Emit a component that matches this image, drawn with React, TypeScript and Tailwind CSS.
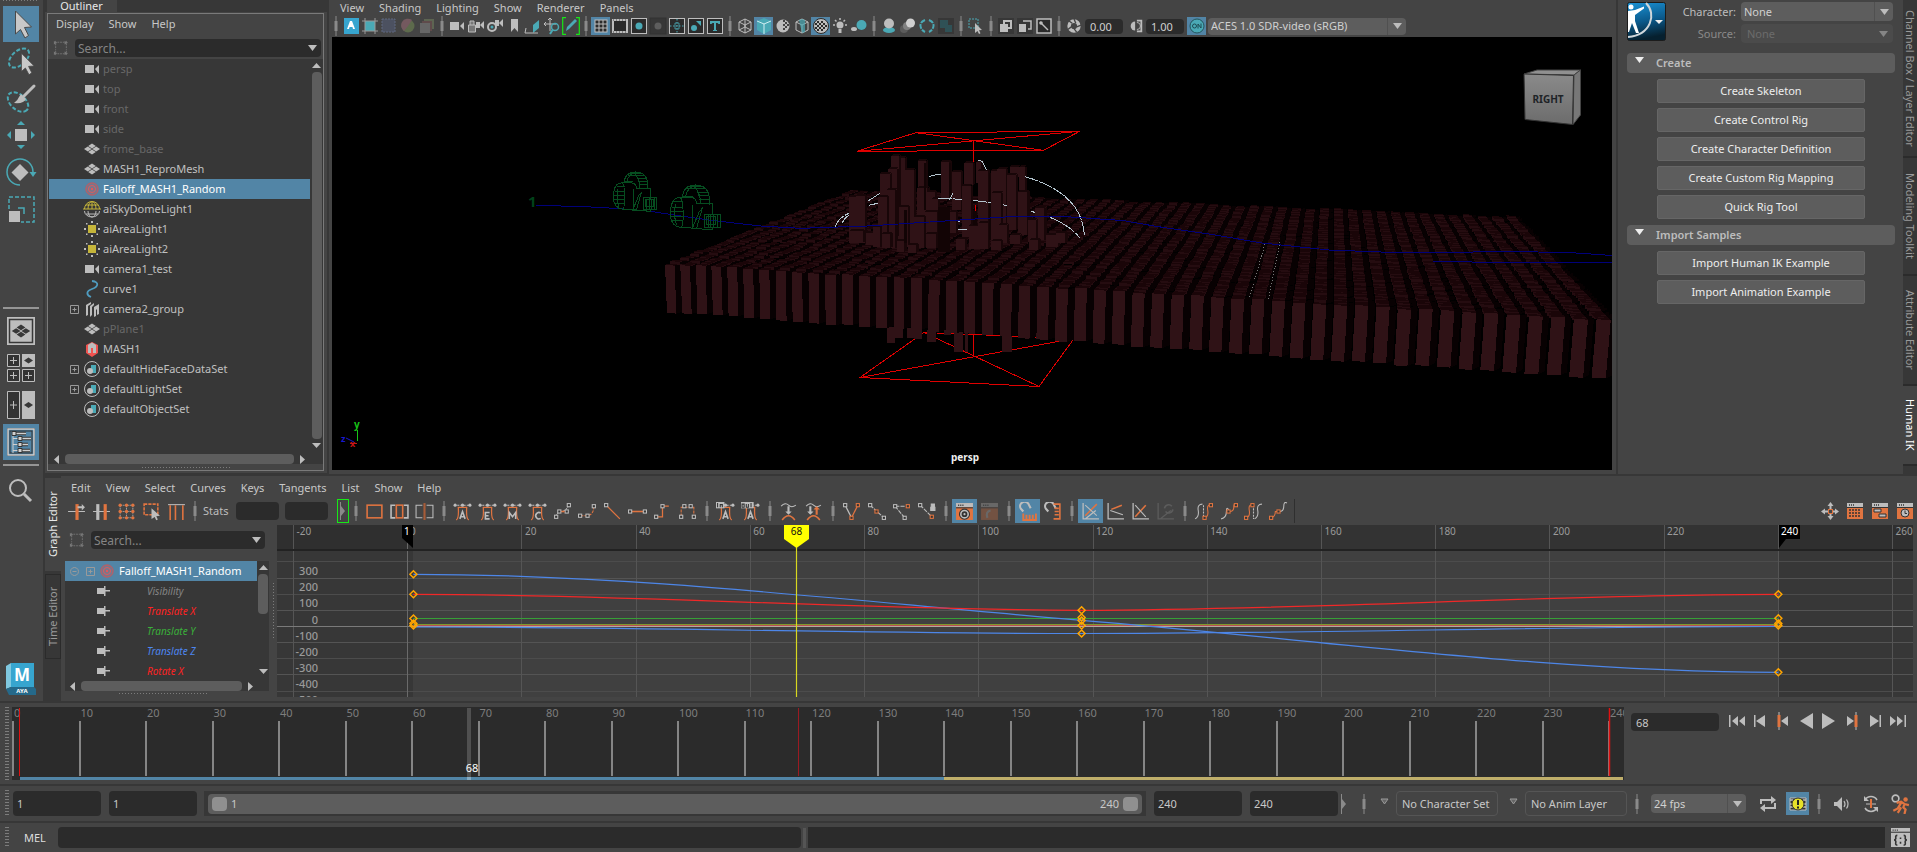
import React from "react";

const L = "#bdbdbd";
const T = "#4aa9b5";
const O = "#e07440";
const D = "#2b2b2b";

type Kids = { children?: React.ReactNode };

function Svg({ s = 18, children }: Kids & { s?: number }) {
  return (
    <svg width={s} height={s} viewBox="0 0 18 18" fill="none" className="shrink-0" aria-hidden="true">
      {children}
    </svg>
  );
}

function Big({ children }: Kids) {
  return (
    <svg width="36" height="36" viewBox="0 0 36 36" fill="none" aria-hidden="true">
      {children}
    </svg>
  );
}

function Down({ w = 9, c = L }: { w?: number; c?: string }) {
  return (
    <svg width={w} height="6" viewBox="0 0 10 6" preserveAspectRatio="none" aria-hidden="true" className="shrink-0">
      <path d="M0 0H10L5 6Z" fill={c} />
    </svg>
  );
}

function Tri({ dir }: { dir: "up" | "down" | "left" | "right" }) {
  const d = { up: "M0 7H9L4.500 2Z", down: "M0 2H9L4.500 7Z", left: "M7 0V9L2 4.500Z", right: "M2 0V9L7 4.500Z" }[dir];
  return (
    <svg width="9" height="9" viewBox="0 0 9 9" className="shrink-0" aria-hidden="true">
      <path d={d} fill={L} />
    </svg>
  );
}

function Dots({ h = true }: { h?: boolean }) {
  return h ? (
    <div className="mx-auto h-px w-22 bg-[repeating-linear-gradient(90deg,#7c7c7c_0_1px,transparent_1px_3px)]" />
  ) : (
    <div className="my-auto h-14 w-px bg-[repeating-linear-gradient(180deg,#7c7c7c_0_1px,transparent_1px_3px)]" />
  );
}

function Grip() {
  return (
    <div className="flex w-3 shrink-0 justify-center py-1 pl-px">
      <div className="h-full w-1 bg-[repeating-linear-gradient(180deg,#7c7c7c_0_1px,transparent_1px_3px)]" />
    </div>
  );
}

function Sep({ className = "w-[11px]" }: { className?: string }) {
  return (
    <span className={"flex shrink-0 justify-center " + className}>
      <svg width="4" height="20" viewBox="0 0 4 20" aria-hidden="true">
        <path d="M1.500 0h1v20h-1zM.5 5h3v10h-3z" fill="#8a8a8a" />
      </svg>
    </span>
  );
}

/* ---------- toolbox ---------- */

const ARROW = "M13 4L29 20L22 20.500L26 28.500L22.500 31L18 22.500L13 27Z";

function Quad({ x, y, c = L, k = 1 }: { x: number; y: number; c?: string; k?: number }) {
  const d = (dx: number, dy: number) =>
    `M${x + dx * k} ${y + (dy - 2.6) * k}l${4 * k} ${2.6 * k}l${-4 * k} ${2.6 * k}l${-4 * k} ${-2.6 * k}z`;
  return <path d={d(0, -3.2) + d(-4.4, 0) + d(4.4, 0) + d(0, 3.2)} fill={c} />;
}

const TOOLS: [string, React.ReactNode][] = [
  ["Select Tool", <path d={ARROW} transform="translate(-.5 1)" fill="#c8c8c8" stroke="#4a4a4a" />],
  [
    "Lasso Tool",
    <>
      <ellipse cx="16" cy="15" rx="12" ry="7" transform="rotate(-42 16 15)" stroke={T} strokeWidth="2" strokeDasharray="4 2" />
      <path d={ARROW} transform="translate(8 7) scale(.8)" fill="#c8c8c8" stroke="#444" />
    </>,
  ],
  [
    "Paint Selection Tool",
    <>
      <ellipse cx="15" cy="22" rx="12" ry="7.500" transform="rotate(42 15 22)" stroke={T} strokeWidth="2" strokeDasharray="4 2" />
      <path d="M31 6L21 16" stroke={L} strokeWidth="3" strokeLinecap="round" />
      <path d="M18 14L23 19Q21 24 11 23Q15 20 16 17Z" fill={L} />
    </>,
  ],
  [
    "Move Tool",
    <>
      <rect x="12" y="12" width="12" height="12" fill={L} />
      <path d="M18 4l4 4h-8zM18 32l4-4h-8zM4 18l4-4v8zM32 18l-4-4v8z" fill={T} />
    </>,
  ],
  [
    "Rotate Tool",
    <>
      <path d="M17 10l8.500 8.500L17 27l-8.500-8.500z" fill={L} />
      <path d="M30 18A13 13 0 1 0 17 31" stroke={T} strokeWidth="1.500" />
      <path d="M26.500 18h7l-3.500 5z" fill={T} />
    </>,
  ],
  [
    "Scale Tool",
    <>
      <path d="M6 18V6H31V31H18" stroke={T} strokeWidth="1.500" strokeDasharray="4 2" />
      <rect x="6" y="20" width="11" height="11" fill={L} />
      <path d="M15 17H21V23" stroke={T} strokeWidth="1.500" />
    </>,
  ],
];

const LAYOUTS: [string, React.ReactNode][] = [
  [
    "Single Perspective View",
    <>
      <rect x="4" y="4" width="28" height="28" fill={L} />
      <rect x="6.500" y="6.500" width="23" height="23" stroke="#383838" strokeWidth="1.500" />
      <Quad x={18} y={18} c="#383838" k={1.1} />
    </>,
  ],
  [
    "Four View",
    <>
      <path d="M4.500 4.500h12v12h-12zM4.500 19.500h12v12h-12zM19.500 19.500h12v12h-12z" fill="#333" stroke={L} />
      <path d="M10.500 7v7M7 10.500h7M10.500 22v7M7 25.500h7M25.500 22v7M22 25.500h7" stroke={L} />
      <rect x="19" y="4" width="13" height="13" fill={L} />
      <path d="M25.500 7.500l4.500 3-4.500 3-4.500-3z" fill="#383838" />
    </>,
  ],
  [
    "Two Panes Side by Side",
    <>
      <path d="M4.500 4.500h12v27h-12z" fill="#333" stroke={L} />
      <path d="M10.500 14v8M7 18h7" stroke={L} />
      <rect x="19" y="4" width="13" height="28" fill={L} />
      <path d="M25.500 15l4.500 3-4.500 3-4.500-3z" fill="#383838" />
    </>,
  ],
  [
    "Outliner Layout",
    <>
      <rect x="4" y="4" width="28" height="28" fill="#333" />
      <rect x="5" y="5" width="26" height="26" fill="#5285a6" stroke="#cfcfcf" strokeWidth="1.500" />
      <rect x="7" y="7" width="22" height="22" stroke="#333" />
      <path d="M10 10V29M10 14.500H17M10 20.500H17M10 26.500H17" stroke="#cfcfcf" />
      <path d="M12 9.500H23M18 14.500H28M18 20.500H25M18 26.500H27" stroke="#333" strokeWidth="3.500" />
      <path d="M12 9.500H23M18 14.500H28M18 20.500H25M18 26.500H27" stroke="#cfcfcf" strokeWidth="1.500" />
      <path d="M9 7.500h4v4h-4zM15 12.500h4v4h-4zM15 18.500h4v4h-4zM15 24.500h4v4h-4z" fill="#cfcfcf" stroke="#333" />
    </>,
  ],
];

function ToolButton({ label, on, children }: Kids & { label: string; on?: boolean }) {
  return (
    <button aria-label={label} className={"h-9 w-9 shrink-0 " + (on ? "bg-[#5285a6]" : "")}>
      <Big>{children}</Big>
    </button>
  );
}

function Toolbox() {
  return (
    <nav aria-label="Tool box" className="flex w-[43px] shrink-0 flex-col bg-[#444] pl-[3px]">
      <div className="mb-[5px] h-px w-9 bg-[repeating-linear-gradient(90deg,#7c7c7c_0_1px,transparent_1px_3px)]" />
      <div className="flex flex-col gap-px">
        {TOOLS.map(([n, g], i) => (
          <ToolButton key={n} label={n} on={i === 0}>
            {g}
          </ToolButton>
        ))}
      </div>
      <div className="mt-20 h-0.5 w-9 bg-[#959595]" />
      <div className="mt-1 flex flex-col gap-px">
        {LAYOUTS.map(([n, g], i) => (
          <ToolButton key={n} label={n} on={i === 3}>
            {g}
          </ToolButton>
        ))}
      </div>
      <div className="mt-1 h-0.5 w-9 bg-[#959595]" />
      <div className="mt-1.5">
        <ToolButton label="Search">
          <circle cx="15" cy="16" r="8" stroke={L} strokeWidth="2" />
          <path d="M21 22L28 29" stroke={L} strokeWidth="3" />
        </ToolButton>
      </div>
      <svg width="30" height="33" viewBox="0 0 30 33" className="mt-auto mb-[5px] ml-[3px]" role="img" aria-label="Maya">
        <path d="M0 3L5 0V24L0 26Z" fill="#7fc8e0" />
        <path d="M5 0H28V24H5Z" fill="#37a5cf" />
        <path d="M0 26L5 24H28L30 26V32H3Z" fill="#25698a" />
        <text x="16" y="18" textAnchor="middle" fontSize="17" fontWeight="700" fill="#fff">M</text>
        <text x="16" y="30" textAnchor="middle" fontSize="6" fontWeight="700" fill="#fff">AYA</text>
      </svg>
    </nav>
  );
}

/* ---------- outliner ---------- */

const CAM = (
  <Svg>
    <path d="M2 5h9v8H2zM12 9l4-4v9z" fill={L} />
  </Svg>
);
const MESH = (
  <Svg>
    <Quad x={9} y={9} k={0.95} />
  </Svg>
);
const TARGET = (
  <Svg>
    <circle cx="9" cy="9" r="7" fill="#a9646a" opacity=".4" />
    <circle cx="9" cy="9" r="6" stroke="#c35a60" />
    <circle cx="9" cy="9" r="3.500" stroke="#e05a5c" />
    <circle cx="9" cy="9" r="1.200" fill="#e05a5c" />
  </Svg>
);
const AREA = (
  <Svg>
    <rect x="5" y="5" width="8" height="8" fill="#c5b53b" />
    <path d="M8 1h2v2H8zM8 15h2v2H8zM1 8h2v2H1zM15 8h2v2h-2zM3 3h1.500v1.500H3zM13.500 3H15v1.500h-1.500zM3 13.500h1.500V15H3zM13.500 13.500H15V15h-1.500z" fill={L} />
  </Svg>
);
const SET = (
  <Svg>
    <circle cx="9" cy="9" r="7.500" stroke={L} />
    <path d="M8 5h5v8H9V9H8z" fill={T} />
    <circle cx="7" cy="11" r="3" fill={L} />
  </Svg>
);
const SKY = (
  <Svg>
    <path d="M1.500 9a7.500 7.500 0 0 1 15 0M5 9a4 7.500 0 0 1 8 0M9 1.500V9M3 5h12M0 9h18" stroke="#c5b53b" />
    <path d="M1.500 11a7.500 6 0 0 0 15 0M5 11a4 6 0 0 0 8 0M3 14h12" stroke={L} />
  </Svg>
);
const CURVE = (
  <Svg>
    <path d="M9 1C17 2 15 7 9 9S3 15 8 17" stroke="#4f9cc0" strokeWidth="1.800" />
  </Svg>
);
const GROUP = (
  <Svg>
    <path d="M3 5l5-3v2L5 6v9l-2 1zM7 6l4-3v2L9 7v8l-2 2zM11 7l5-3v10l-2 1V9l-1 1v6l-2 1z" fill={L} />
  </Svg>
);
const MASH = (
  <Svg>
    <path d="M9 2l6 3v8l-6 4-6-4V5z" fill="#ef5350" />
    <path d="M5 5l4-2.500L13 5v8h-3V8H8v5H5z" fill={L} />
  </Svg>
);

const NODES: { n: string; i: React.ReactNode; dim?: boolean; plus?: boolean; on?: boolean }[] = [
  { n: "persp", i: CAM, dim: true },
  { n: "top", i: CAM, dim: true },
  { n: "front", i: CAM, dim: true },
  { n: "side", i: CAM, dim: true },
  { n: "frome_base", i: MESH, dim: true },
  { n: "MASH1_ReproMesh", i: MESH },
  { n: "Falloff_MASH1_Random", i: TARGET, on: true },
  { n: "aiSkyDomeLight1", i: SKY },
  { n: "aiAreaLight1", i: AREA },
  { n: "aiAreaLight2", i: AREA },
  { n: "camera1_test", i: CAM },
  { n: "curve1", i: CURVE },
  { n: "camera2_group", i: GROUP, plus: true },
  { n: "pPlane1", i: MESH, dim: true },
  { n: "MASH1", i: MASH },
  { n: "defaultHideFaceDataSet", i: SET, plus: true },
  { n: "defaultLightSet", i: SET, plus: true },
  { n: "defaultObjectSet", i: SET },
];

function Menu({ items, className }: { items: string[]; className: string }) {
  return (
    <div role="menubar" className={"flex shrink-0 items-center gap-[15px] text-[#c8c8c8] " + className}>
      {items.map((m) => (
        <button key={m} role="menuitem">
          {m}
        </button>
      ))}
    </div>
  );
}

function FilterIcon() {
  return (
    <Svg s={16}>
      <path d="M3 1v5M3 12v5M15 1v5M15 12v5M5 2.500h8M5 15.500h8M3 7v4M15 7v4" stroke="#777" strokeDasharray="2 1" />
      <path d="M1 1l4 2-4 2zM13 1l4 2-4 2zM1 13l4 2-4 2zM13 13l4 2-4 2z" fill="#777" />
    </Svg>
  );
}

function Search({ label, className }: { label: string; className: string }) {
  return (
    <div className={"flex h-[18px] shrink-0 items-center " + className}>
      <FilterIcon />
      <div className="ml-1.5 flex h-full flex-1 items-center rounded-sm bg-[#2b2b2b] pr-1">
        <input aria-label={label} placeholder="Search..." className="h-full w-0 flex-1 bg-transparent px-[3px] text-[12px] outline-none placeholder:text-[#858585]" />
        <Down />
      </div>
    </div>
  );
}

function Plus({ round }: { round?: boolean }) {
  return (
    <svg width="9" height="9" viewBox="0 0 9 9" fill="none" className="shrink-0" stroke="#9a9a9a" aria-hidden="true">
      {round ? <path d="M2.500 4.500h4M4.500.5a4 4 0 1 0 .01 0" /> : <path d="M.5.5h8v8h-8zM2.500 4.500h4M4.500 2.500v4" />}
    </svg>
  );
}

function HScroll({ className }: { className: string }) {
  return (
    <div className={"flex h-[10px] shrink-0 items-center gap-1 pl-[3px] " + className}>
      <Tri dir="left" />
      <div className="h-full flex-1 rounded bg-[#5d5d5d]" />
      <Tri dir="right" />
    </div>
  );
}

function Outliner() {
  return (
    <section aria-label="Outliner" className="flex w-[282px] shrink-0 flex-col bg-[#373737]">
      <header className="flex shrink-0 pl-0.5">
        <h2 className="flex h-3 w-[70px] items-start justify-center bg-[#444] pr-px text-[11px] leading-3 text-[#e8e8e8]">Outliner</h2>
      </header>
      <div className="flex min-h-0 flex-1 flex-col bg-[#444] px-0.5 pt-px pr-[3px] pb-0.5">
        <div className="flex min-h-0 flex-1 flex-col border border-[#7a7a7a]">
          <Menu items={["Display", "Show", "Help"]} className="h-[19px] pl-2" />
          <Search label="Search outliner" className="mt-[6px] mr-0.5 pl-[5px]" />
          <div className="mt-0.5 flex min-h-0 flex-1 flex-col bg-[#373737] pl-px">
            <div className="flex min-h-0 flex-1">
              <ul className="min-w-0 flex-1">
                {NODES.map((r) => (
                  <li
                    key={r.n}
                    className={"flex h-5 items-center " + (r.on ? "bg-[#5285a6] text-white" : r.dim ? "text-[#686868]" : "text-[#c0c0c0]")}
                  >
                    <span className="flex w-[34px] shrink-0 pl-[21px]">{r.plus && <Plus />}</span>
                    {r.i}
                    <span className="pl-0.5">{r.n}</span>
                  </li>
                ))}
              </ul>
              <div className="flex w-[13px] shrink-0 flex-col items-center pt-0.5">
                <Tri dir="up" />
                <div className="my-0.5 w-[10px] flex-1 rounded bg-[#5d5d5d]" />
                <Tri dir="down" />
              </div>
            </div>
            <HScroll className="mt-1 pr-4" />
          </div>
          <div className="flex h-[6px] items-center">
            <Dots />
          </div>
        </div>
      </div>
      <div className="h-px shrink-0" />
    </section>
  );
}

/* ---------- viewport ---------- */

const box = (
  <path d="M9 2l6 3v8l-6 3-6-3V5zM3 5l6 3 6-3M9 8v8" stroke={L} />
);
const frame = <rect x="1.500" y="1.500" width="15" height="15" fill={D} stroke={L} />;

type Item = [string, React.ReactNode, string?] | null;
const VIEW_TOOLS: Item[] = [
  null,
  ["Arnold", <><rect x="2" y="1" width="15" height="16" fill="#37a5cf" /><path d="M5 12L8 4h2l3 8h-2l-.5-2h-3L7 12z" fill="#fff" /></>],
  ["Isolate select", <><rect x="4" y="4" width="10" height="10" fill={T} /><path d="M4 1v16M14 1v16M1 4h16M1 14h16" stroke="#999" /></>],
  ["Crop region", <path d="M2 2h13v13H2z" stroke="#5f6880" strokeDasharray="2 1" fill="#4c5160" />],
  ["Color", <><circle cx="9" cy="9" r="6.500" fill="#5d6a4c" /><path d="M9 9L3 5a7 7 0 0 1 10-2zM9 9l-6-4a7 7 0 0 0 2 9z" fill="#74595f" /></>],
  ["Images", <><path d="M6 2h10v10H6z" fill="#5d6552" /><path d="M4 4h10v10H4z" fill="#5f4b4b" /><path d="M2 6h10v10H2z" fill="#666" /></>],
  null,
  ["Camera", <path d="M2 5h9v8H2zM12 9l4-4v8z" fill={L} />],
  ["Lock camera", <><path d="M9 5h4v6H9zM13 8l4-4v8z" fill={L} /><path d="M1.500 8h7v7h-7zM3 8V4h4v4" stroke={L} fill="#777" /></>],
  ["Camera settings", <><path d="M9 3h4v6h-4zM13 6l4-4v8z" fill={L} /><circle cx="6" cy="10" r="4" stroke={L} strokeWidth="2" /><circle cx="6" cy="10" r="1.500" fill={T} /></>],
  ["Bookmark", <path d="M6 2h7v13l-3.500-4L6 15z" fill={L} />],
  ["Image plane", <><path d="M9 8l6-5v8l-6 5z" fill={T} /><path d="M2 11l-1 5h13" stroke={L} /></>],
  ["Pan zoom", <><path d="M7 1v13M1 7h12M5 3l2-2 2 2M3 5L1 7l2 2" stroke={L} /><circle cx="12" cy="10" r="3.500" stroke={T} strokeWidth="1.500" /><path d="M9.500 13L7 17" stroke={T} strokeWidth="2" /></>],
  ["Grease pencil", <><path d="M4 14l1-4 8-8 2 2-8 8z" fill={T} /><path d="M4 .7H.7v16.600H4M14 .7h3.300v16.600H14" stroke="#17e817" strokeWidth="1.200" /></>],
  null,
  ["Grid", <><rect x="3" y="3" width="12" height="12" fill={D} stroke={L} /><path d="M7 3v12M11 3v12M3 7h12M3 11h12" stroke={L} /></>, "on"],
  ["Film gate", <><path d="M2 3h14v12H2z" fill={D} stroke={L} strokeWidth="2" /><path d="M2 3h14M2 15h14" stroke="#444" strokeDasharray="1 2" /></>],
  ["Resolution gate", <>{frame}<circle cx="9" cy="9" r="3.500" fill={T} /></>],
  ["Gate mask", <><rect x="1" y="1" width="16" height="16" fill="#373737" stroke="#333" /><circle cx="9" cy="9" r="3.500" fill="#5d5d5d" /></>],
  ["Field chart", <>{frame}<path d="M9 2v14M2 9h14" stroke={T} strokeDasharray="1.500 1.500" /><path d="M7 6h4v6H7z" stroke={T} strokeWidth=".8" /></>],
  ["Safe action", <>{frame}<circle cx="7" cy="11" r="3" fill={T} /><path d="M9 4h5v5z" fill={T} /></>],
  ["Safe title", <>{frame}<path d="M4 4h10v3h-1.500l-1-1H10v7h1v1H7v-1h1V6H6.500l-1 1H4z" fill={T} /></>],
  null,
  ["Wireframe", <>{box}<path d="M3 13l6-3 6 3M9 2v8" stroke={L} /></>],
  ["Smooth shade", <><path d="M9 1l7 3v9l-7 4-7-4V4z" fill={T} /><path d="M2 4l7 3 7-3M9 7v10" stroke="#d0eef2" /></>, "on"],
  ["Default material", <><circle cx="9" cy="9" r="6.500" fill={L} /><path d="M9 3h2v2H9zM11 5h2v2h-2zM9 7h2v2H9zM11 9h2v2h-2zM9 11h2v2H9zM13 7h2v2h-2z" fill="#444" /></>],
  ["Textured edges", <>{box}<path d="M6 3l3-1 3 1v12l-3 1z" fill={T} opacity=".7" /></>],
  ["Textured", <><circle cx="9" cy="9" r="7.500" fill={L} stroke={D} /><path d="M5 4h2v2H5zM9 4h2v2H9zM7 6h2v2H7zM11 6h2v2h-2zM3 6h2v2H3zM5 8h2v2H5zM9 8h2v2H9zM13 8h2v2h-2zM7 10h2v2H7zM11 10h2v2h-2zM3 10h2v2H3zM5 12h2v2H5zM9 12h2v2H9z" fill={D} /></>, "on"],
  ["Use all lights", <><circle cx="9" cy="8" r="3.500" fill={L} /><path d="M7.500 12h3v4h-3z" fill={L} /><path d="M9 1v2M2 8h2M14 8h2M4 3l1.500 1.500M14 3l-1.500 1.500" stroke={L} strokeWidth="1.500" /></>],
  ["Shadows", <><circle cx="11.500" cy="8" r="5" fill={T} /><ellipse cx="4" cy="12" rx="3" ry="2" fill={L} /></>],
  null,
  ["Ambient occlusion", <><ellipse cx="9" cy="13" rx="6" ry="3" fill={T} /><circle cx="9" cy="6.500" r="5" fill={L} /></>],
  ["Motion blur", <><circle cx="5" cy="12" r="4" fill="#5c5c5c" /><circle cx="8" cy="9" r="4" fill="#808080" /><circle cx="11.500" cy="6" r="4.500" fill="#d0d0d0" /></>],
  ["Anti-aliasing", <path d="M7 3Q2 5 2.500 9T7 15M11 3Q16 5 15.500 9T11 15" stroke={T} strokeWidth="2" strokeDasharray="5 1" />],
  ["Depth of field", <><path d="M1 1h16v16H1z" fill="#373737" /><path d="M3 3h8v8H3zM8 8h7v7H8z" fill="#2f5156" /></>],
  null,
  ["Select region", <><path d="M2 2h9v9H2z" stroke={T} strokeDasharray="2 1" /><path d="M8 6l7 7-3 .3 1.500 3-1.500.7-1.500-3L8 16z" fill={L} /></>],
  null,
  ["Xray", <><path d="M1 1h16v16H1z" fill="#373737" /><path d="M3 7h8v8H3z" fill={L} /><path d="M7 4h7v7H7z" stroke={L} strokeWidth="2" /></>],
  ["Xray joints", <><path d="M1 1h16v16H1z" fill="#373737" /><path d="M3 7h7v8H3z" fill={L} /><path d="M7 4h8v8h-3" stroke={L} strokeWidth="1.500" /></>],
  ["Xray components", <><rect x="2" y="2" width="14" height="14" fill={D} stroke={L} strokeWidth="1.500" /><path d="M5 5l8 8" stroke={L} strokeWidth="1.500" /><circle cx="6" cy="6" r="1.800" fill={L} /></>],
  null,
];

function Tool({ label, mode, wide, children }: Kids & { label: string; mode?: string; wide?: boolean }) {
  const size = wide ? "h-6 w-[25px]" : "h-[18px] w-[19px]";
  return (
    <button aria-label={label} className={"flex shrink-0 items-center justify-center " + size + (mode === "on" ? " bg-[#5285a6]" : "")}>
      {children}
    </button>
  );
}

function ViewToolbar() {
  return (
    <div role="toolbar" aria-label="Panel toolbar" className="flex h-5 shrink-0 items-center pl-px">
      {VIEW_TOOLS.map((t, i) =>
        t ? (
          <Tool key={i} label={t[0]} mode={t[2]}>
            <Svg s={18}>{t[1]}</Svg>
          </Tool>
        ) : (
          <Sep key={i} />
        ),
      )}
      <Tool label="Exposure">
        <Svg s={16}>
          <circle cx="9" cy="9" r="5.500" stroke={L} strokeWidth="4" />
          <path d="M9 1l2 5M17 8l-5 2M12 16l-3-4M2 13l4-3M3 3l4 3" stroke="#444" strokeWidth="1.500" />
        </Svg>
      </Tool>
      <input aria-label="Exposure value" defaultValue="0.00" className="ml-0.5 h-[15px] w-[38px] rounded-sm bg-[#2b2b2b] px-[5px] text-[#d0d0d0]" />
      <span className="w-[3px]" />
      <Tool label="Gamma">
        <Svg s={16}>
          <path d="M10 3h5v12h-5" stroke={L} strokeWidth="2" />
          <path d="M8 4a5 5 0 0 0 0 10z" fill={L} />
          <path d="M10 5a4 4 0 0 1 0 8" stroke={L} />
        </Svg>
      </Tool>
      <input aria-label="Gamma value" defaultValue="1.00" className="ml-px h-[15px] w-[38px] rounded-sm bg-[#2b2b2b] px-[5px] text-[#d0d0d0]" />
      <span className="w-[3px]" />
      <Tool label="View transform on" mode="on">
        <Svg s={18}>
          <circle cx="9" cy="9" r="7" fill={T} stroke="#24545c" />
          <circle cx="6.500" cy="9" r="2" stroke="#1d4b52" />
          <path d="M10 11.500V7l3 4V6.500" stroke="#1d4b52" />
        </Svg>
      </Tool>
      <Select label="View transform" value="ACES 1.0 SDR-video (sRGB)" className="ml-0.5 h-[17px] w-[198px]" />
    </div>
  );
}

function Select({ label, value, className, off }: { label: string; value: string; className: string; off?: boolean }) {
  return (
    <span className={"grid shrink-0 grid-cols-[1fr_19px] rounded-sm " + (off ? "bg-[#4b4b4b] text-[#6c6c6c] " : "bg-[#5d5d5d] text-[#d0d0d0] ") + className}>
      <select
        aria-label={label}
        disabled={off}
        className={"col-span-2 col-start-1 row-start-1 h-full w-full appearance-none bg-transparent outline-none " + (off ? "px-1.5" : "px-[3px]")}
      >
        <option>{value}</option>
      </select>
      <span className={"pointer-events-none col-start-2 row-start-1 flex items-center justify-center " + (off ? "" : "border-l border-[#505050]")}>
        <Down c={off ? "#858585" : L} />
      </span>
    </span>
  );
}

function noise(a: number, b: number) {
  const v = Math.sin(a * 127.1 + b * 311.7) * 43758.5453;
  return v - Math.floor(v);
}

/* 50 x 50 instanced blocks projected in perspective, back row first */
const N = 50;
function at(i: number, s: number) {
  const t = (1.35 * s) / (1 + 0.35 * s);
  const fx = 665 + 15.24 * i + 0.077 * i * i;
  const fy = 265 + 0.92 * i + 0.00456 * i * i;
  const bx = 853 + 12 * i + 0.027 * i * i;
  const by = 191 + 0.45 * i + 0.00168 * i * i;
  return [fx + (bx - fx) * t, fy + (by - fy) * t];
}
const q = (p: number[][]) => "M" + p.map((c) => c[0].toFixed(1) + " " + c[1].toFixed(1)).join("L") + "Z";

const ROWS = Array.from({ length: N }, (_, k) => {
  const j = N - 1 - k;
  let side = "";
  let front = "";
  let top = "";
  for (let i = 0; i < N; i++) {
    const h = noise(i, j) * 2.2;
    const lift = (p: number[]) => [p[0], p[1] - h];
    const a = lift(at(i, j / N));
    const b = lift(at(i + 0.62, j / N));
    const c = lift(at(i + 0.62, (j + 0.7) / N));
    const d = lift(at(i, (j + 0.7) / N));
    top += q([a, b, c, d]);
    const depth = j === 0 ? 48 + 0.21 * i : 2 + noise(j, i) * 2;
    const tilt = j === 0 ? 2 - i / 7 : 0;
    front += q([a, b, [b[0] + tilt, b[1] + depth], [a[0] + tilt, a[1] + depth]]);
    const e = lift(at(i + 0.95, (j + 0.6) / N));
    side += q([b, e, [e[0] + tilt, e[1] + depth * 0.97], [b[0] + tilt, b[1] + depth]]);
  }
  return { side, front, top, key: j };
});

const FALLOFF = [
  [1003, 144, 21, 380], [989, 138, 20, 400], [1025, 180, 22, 400], [981, 178, 22, 380], [961, 192, 25, 400],
  [1057, 153, 20, 300], [1115, 156, 21, 265], [1143, 186, 23, 300], [1173, 160, 23, 225], [1205, 156, 12, 220],
  [1208, 182, 26, 350], [1290, 170, 23, 200], [1313, 172, 14, 250], [1242, 182, 20, 260], [1257, 178, 23, 350],
  [1282, 195, 23, 360], [883, 260, 26, 400], [900, 258, 23, 400], [1055, 235, 26, 380], [1080, 245, 20, 400],
  [978, 240, 22, 415], [957, 260, 22, 400], [1168, 228, 23, 380], [1243, 250, 24, 390], [1310, 245, 24, 375],
  [1353, 294, 24, 390], [1090, 268, 17, 375], [1010, 290, 22, 410], [1138, 305, 15, 370], [1075, 305, 30, 380],
  [1047, 320, 25, 415], [1335, 330, 20, 395], [1262, 345, 20, 400], [885, 362, 32, 398], [925, 370, 18, 405],
  [943, 350, 18, 410], [965, 372, 22, 414], [1003, 392, 20, 425], [1077, 372, 26, 415], [1185, 348, 24, 418],
  [1210, 340, 24, 418], [1153, 388, 23, 420], [1290, 375, 25, 402], [1338, 390, 23, 420], [1381, 375, 29, 412],
  [1243, 392, 24, 420], [1033, 405, 20, 428], [1405, 370, 25, 400],
];
const BELOW = [
  [979, 650, 21, 700], [1000, 650, 18, 684], [1029, 655, 21, 684], [1048, 655, 20, 686], [1080, 660, 23, 695],
  [1123, 660, 17, 675], [1148, 665, 23, 727], [1176, 670, 8, 725], [1270, 660, 24, 725],
];
const DARK = [
  [1108, 290, 30, 425], [1196, 300, 10, 345], [1236, 190, 6, 390], [1023, 300, 6, 400], [1072, 160, 6, 300], [1136, 160, 5, 265],
];

const nss = { vectorEffect: "non-scaling-stroke" as const };

function CameraWire({ x, y, k }: { x: number; y: number; k: number }) {
  return (
    <g transform={`translate(${x} ${y}) scale(${k})`} stroke="#064d20" fill="none">
      <path {...nss} d="M27 33C28 10 38 0 56 0C74 0 86 14 86 34V52M33 33C36 14 46 2 60 2M50 1C60 10 66 24 67 48M27 30H50M60 20H84M62 28H86M64 38H87M40 4H72M36 10H76" />
      <path {...nss} d="M0 75C0 48 8 33 20 33H46C54 33 58 40 58 50M22 33C30 38 30 108 24 110M0 75C0 98 10 110 24 112L58 114M12 50C8 60 8 90 14 104M0 70H28M2 82H28M4 94H28M4 58H28M8 44H28" />
      <path {...nss} d="M58 50H94V80M48 116L64 70L72 60M58 114L70 64M50 52V112M50 114L94 118V112M76 78H110V112H76ZM80 84H100V104H80ZM84 80V110M90 76V114M96 80V110M104 78V112" />
    </g>
  );
}

function Scene() {
  const rect = (r: number[]) => `M${r[0]} ${r[1]}h${r[2]}V${r[3]}h${-r[2]}z`;
  return (
    <svg viewBox="332 37 1280 433" preserveAspectRatio="xMidYMid slice" className="h-full w-full bg-black" role="img" aria-label="Perspective viewport">
      <g shapeRendering="crispEdges">
        <g fill="none" stroke="#e00000">
          <path d="M924 332.500L1074 338.600L1039 386.500L860 377.500Z M924 332.500L1039 386.500M1074 338.600L860 377.500M973 357V330" />
        </g>
        <g transform="translate(500 110) scale(.3954 .3333)">
          <path d={BELOW.map(rect).join("")} fill="#2f1216" />
        </g>
        {ROWS.map((r) => (
          <g key={r.key}>
            <path d={r.side} fill="#080102" />
            <path d={r.front} fill={r.key === 0 ? "#2f1216" : "#250c10"} />
            <path d={r.top} fill="#1a0508" />
          </g>
        ))}
        <g transform="translate(500 110) scale(.3954 .3333)">
          {FALLOFF.map((r) => (
            <g key={r.join()}>
              <path d={`M${r[0] + r[2]} ${r[1]}l6 -3V${r[3] - 4}l-6 4zM${r[0]} ${r[1]}l5 -6h${r[2]}l-5 6z`} fill="#180608" />
              <path d={rect(r)} fill="#2f1216" />
            </g>
          ))}
          <path d={DARK.map(rect).join("")} fill="#120405" />
          <g fill="none">
            <path {...nss} stroke="#e00000" d="M1052 68L1466 64L1374 121L902 124ZM1052 68L1374 121M1466 64L902 124M1197 93V155M1203 286V302" />
            <path
              {...nss}
              stroke="#b4c5cf"
              d="M848 350Q856 322 883 310M866 338Q872 322 883 316M932 272L961 250M932 286L955 280M1085 200Q1100 193 1115 193M1108 265Q1140 265 1168 269M1196 271L1243 278M1272 284l9 3M1328 200Q1472 250 1478 375M1391 322Q1440 345 1466 383M1343 304l9 3M1209 150L1220 155L1230 180M1137 270l8 -20M1158 358h22M1162 335l-4 -4"
              strokeDasharray="14 1"
            />
            <path {...nss} stroke="#00007a" d="M90 286L215 290L290 295L380 304L440 315L540 332L660 348L760 355L930 348L1100 335L1290 320L1430 320L1568 331" />
          </g>
          <CameraWire x={287} y={186} k={1} />
          <CameraWire x={431} y={225} k={1.14} />
        </g>
        <g fill="none" stroke="#00007a">
          <path d="M1120 220L1157 226.500L1209 234L1262 243L1329 250L1407 253L1507 251.500L1569 252.500L1612 255.500M1432 261L1472 262H1612" />
        </g>
        <path d="M1265 244L1249 299M1280 242L1268 301" stroke="#777" strokeDasharray="1 2" />
      </g>
      <text x="528" y="207" fontSize="15" fontWeight="700" fill="#00421a">1</text>
      <path d="M357.500 430V441" stroke="#17c417" />
      <path d="M357 443.500H350" stroke="#c41717" />
      <path d="M354 442L346 438" stroke="#1717d0" />
      <text x="354" y="428" fontSize="10" fontWeight="700" fill="#17c417">y</text>
      <text x="350" y="447" fontSize="9" fontWeight="700" fill="#c41717">x</text>
      <text x="341" y="442" fontSize="9" fontWeight="700" fill="#1717d0">z</text>
      <text x="965" y="461" textAnchor="middle" fontSize="10" fontWeight="700" fill="#eee">persp</text>
      <defs>
        <linearGradient id="cube" x1="0" y1="0" x2="0" y2="1">
          <stop offset="0" stopColor="#8a8a8a" />
          <stop offset="1" stopColor="#6c6c6c" />
        </linearGradient>
      </defs>
      <path d="M1524 74L1537 70H1580.500L1574 75Z" fill="#909090" stroke="#444" />
      <path d="M1574 75L1580.500 70V115L1573 124.500Z" fill="#777" stroke="#444" />
      <path d="M1524 74L1573.500 75.500L1572.500 124.500L1525 119.500Z" fill="url(#cube)" stroke="#333" />
      <text x="1548" y="103" textAnchor="middle" fontSize="10" fontWeight="700" fill="#1e2327">RIGHT</text>
    </svg>
  );
}

function Viewport() {
  return (
    <section aria-label="Viewport" className="flex min-w-0 flex-1 flex-col bg-[#444] pr-1 pb-1">
      <Menu items={["View", "Shading", "Lighting", "Show", "Renderer", "Panels"]} className="h-4 pl-[11px]" />
      <ViewToolbar />
      <div className="mt-px min-h-0 flex-1 pl-[3px]">
        <Scene />
      </div>
    </section>
  );
}

/* ---------- HumanIK ---------- */

function Section({ title, items }: { title: string; items: string[] }) {
  return (
    <div>
      <h3 className="flex h-5 items-center rounded-sm bg-[#5d5d5d] pl-2 font-semibold text-[#bdbdbd]">
        <span className="mb-1.5 flex w-[21px]">
          <Down c="#eee" />
        </span>
        {title}
      </h3>
      <div className="flex flex-col gap-[5px] px-[30px] py-1.5">
        {items.map((b) => (
          <button key={b} className="h-6 rounded-xs border border-[#666] bg-[#5d5d5d] text-[#eee]">
            {b}
          </button>
        ))}
      </div>
    </div>
  );
}

function HumanIK() {
  return (
    <section aria-label="Human IK" className="w-[285px] shrink-0 bg-[#444] pr-2 pl-[9px]">
      <div className="flex pt-0.5 pr-0.5">
        <button aria-label="Human IK menu" className="h-[39px] w-[39px]">
          <svg width="39" height="39" viewBox="0 0 39 39" fill="none" aria-hidden="true">
            <defs>
              <linearGradient id="hik" x1="0" y1="0" x2="0.2" y2="1">
                <stop offset="0" stopColor="#1b93d6" />
                <stop offset=".55" stopColor="#0b5a8c" />
                <stop offset="1" stopColor="#06202f" />
              </linearGradient>
            </defs>
            <rect x=".5" y=".5" width="38" height="38" rx="2" fill="url(#hik)" stroke="#1c1c1c" />
            <path d="M19 1C30 12 24 33 1 35" stroke="#cfd6da" strokeWidth="2" />
            <circle cx="4" cy="5" r="2.500" fill="#fff" />
            <path d="M1 9L8 8L17 4.500V6.500L8 13V19L12 31H9L5 21L2 30H1Z" fill="#fff" />
            <path d="M28 18h8l-4 4z" fill="#eee" />
          </svg>
        </button>
        <div className="ml-auto grid grid-cols-[auto_152px] items-center gap-x-[5px] gap-y-[3px] text-right text-[11px] text-[#bdbdbd]">
          <span>Character:</span>
          <Select label="Character" value="None" className="h-[19px]" />
          <span className="text-[#8a8a8a]">Source:</span>
          <Select label="Source" value="None" off className="h-[19px]" />
        </div>
      </div>
      <div className="mt-[10px]">
        <Section
          title="Create"
          items={["Create Skeleton", "Create Control Rig", "Create Character Definition", "Create Custom Rig Mapping", "Quick Rig Tool"]}
        />
        <Section title="Import Samples" items={["Import Human IK Example", "Import Animation Example"]} />
      </div>
    </section>
  );
}

function SideTabs() {
  const tab = "flex w-[14px] items-center justify-center border-b-2 border-[#2b2b2b] whitespace-nowrap [writing-mode:vertical-rl] ";
  return (
    <div role="tablist" className="flex w-[14px] shrink-0 flex-col bg-[#373737]">
      <button role="tab" className={tab + "h-[158px] text-[#9a9a9a]"}>Channel Box / Layer Editor</button>
      <button role="tab" className={tab + "h-[118px] text-[#9a9a9a]"}>Modeling Toolkit</button>
      <button role="tab" className={tab + "h-[110px] text-[#9a9a9a]"}>Attribute Editor</button>
      <button role="tab" aria-selected="true" className={tab + "h-[80px] bg-[#444] text-white"}>Human IK</button>
    </div>
  );
}

/* ---------- graph editor ---------- */

const sq = (x: number, y: number, c = L) => <rect x={x - 1.5} y={y - 1.5} width="3" height="3" fill="#333" stroke={c} />;
const tangent = (g: React.ReactNode) => (
  <>
    <path d="M3 17C6 16 5 6 5 5H13C13 6 12 16 15 17" stroke={O} strokeWidth="1.200" />
    <path d="M1 3H17" stroke={L} strokeDasharray="2 1" />
    <circle cx="2" cy="3" r="1.500" fill={L} />
    <circle cx="9" cy="3" r="1.500" fill={L} />
    <circle cx="16" cy="3" r="1.500" fill={L} />
    <g stroke={L} strokeWidth="1.500">{g}</g>
  </>
);
const A = <path d="M6.500 16L9 9L11.500 16M7.500 14h3" />;
const axes = <path d="M2 1V16H17M4 16L14 8" stroke={L} strokeWidth="1.200" />;
const win = (g: React.ReactNode) => (
  <>
    <path d="M1 1h16v16H1z" fill={O} />
    <path d="M1 1h16v4H1z" fill={L} />
    <path d="M1 5.500h16" stroke="#333" />
    <path d="M3 3h6" stroke="#333" strokeDasharray="1 1" strokeWidth="1.500" />
    {g}
  </>
);
const gear = <><circle cx="9" cy="11.500" r="3.500" stroke="#333" strokeWidth="3.500" /><circle cx="9" cy="11.500" r="3.500" stroke={L} strokeWidth="1.500" fill="#333" /><circle cx="9" cy="11.500" r="1" fill={L} /></>;
const magnet = <path d="M5 9L2.500 6A4 4 0 0 1 10 2L12 6" stroke={L} strokeWidth="2" />;

const GRAPH_LEFT: [string, React.ReactNode][] = [
  ["Insert Keys Tool", <><path d="M1 9H17" stroke={L} /><path d="M8 2h3v15H8z" fill={O} /><path d="M10 4h4V2l3 3-3 3V6h-4" fill={L} /></>],
  ["Move Nearest Key", <><path d="M1 9h16" stroke={L} /><path d="M4 2h3v15H4z" fill={L} /><path d="M11 2h3v15h-3z" fill={O} /></>],
  ["Lattice Deform Keys", <><path d="M2 3h14M2 9h14M2 15h14M3 2v14M9 2v14M15 2v14" stroke={L} strokeDasharray="1 1" />{[3, 9, 15].map((x) => [3, 9, 15].map((y) => <circle key={x + "-" + y} cx={x} cy={y} r="1.600" fill={O} />))}</>],
  ["Region Tool", <><path d="M2 2h13v10H2z" stroke={O} strokeDasharray="3 1" strokeWidth="1.500" /><path d="M9 6l8 7-3.500.5 1.500 3-1.500.7-1.500-3L9 16z" fill={L} /></>],
  ["Retime Tool", <><path d="M1 2.500h16" stroke={L} /><path d="M3 3v14M8 3v14M15 3v14" stroke={O} strokeWidth="1.500" /></>],
];

const GRAPH_MAIN: Item[] = [
  null,
  ["Frame all", <rect x="2" y="3" width="14" height="12" stroke={O} strokeWidth="1.500" />],
  ["Frame playback range", <><path d="M5 3H1v12h4M13 3h4v12h-4" stroke={L} strokeWidth="1.500" /><rect x="6" y="3" width="6" height="12" stroke={O} strokeWidth="1.500" /></>],
  ["Center view", <><path d="M7 3H1v12h6M11 3h6v12h-6" stroke={L} /><path d="M9 1v16" stroke="#a85c38" strokeWidth="2" /></>],
  null,
  ["Auto tangents", tangent(A)],
  ["Auto ease", tangent(<path d="M11 10H7v6h4M7 13h3" />)],
  ["Auto mix", tangent(<path d="M6 16V10l3 4 3-4v6" />)],
  ["Auto custom", tangent(<path d="M12 10.500A3 3 0 1 0 12 15.500" />)],
  ["Spline", <><path d="M3 14Q4 9 8 9T15 3" stroke={L} strokeDasharray="2 1" />{sq(3, 14)}{sq(6, 9)}{sq(13, 9)}{sq(15, 3)}<path d="M8 9h3" stroke={O} strokeWidth="1.500" /></>],
  ["Clamped", <><path d="M2 13H9Q15 12 15 4" stroke={O} strokeDasharray="3 1" />{sq(2, 13)}{sq(9, 13)}{sq(15, 4)}</>],
  ["Linear", <><path d="M3 3L16 16" stroke={O} strokeWidth="1.200" />{sq(3, 3)}</>],
  ["Flat", <><path d="M3 9H15" stroke={O} strokeWidth="1.500" />{sq(2, 9)}{sq(16, 9)}</>],
  ["Step", <><path d="M3 14H9V4H15" stroke={O} strokeWidth="1.200" />{sq(3, 14)}{sq(9, 4)}</>],
  ["Plateau", <><path d="M3 14V5H15V14" stroke={O} strokeDasharray="3 1" />{sq(3, 14)}{sq(6, 4)}{sq(12, 4)}{sq(15, 14)}</>],
  null,
  ["In tangent", <>{tangent(A)}<path d="M0 0h8v6H0z" fill={L} /><path d="M1.500 1v4M4 5V2.500h2V5" stroke="#333" /></>],
  ["Out tangent", <>{tangent(A)}<path d="M0 0h12v6H0z" fill={L} /><path d="M1 2h2v3H1zM5 2v3h2V2M9.500 1v4" stroke="#333" /></>],
  null,
  ["Buffer curve snapshot", <><path d="M2 4Q6 0 9 3T16 3" stroke={L} /><path d="M8 4h2v5h2l-3 3-3-3h2z" fill={L} /><path d="M3 17Q9 9 15 17" stroke={O} strokeWidth="1.500" /></>],
  ["Swap buffer curve", <><path d="M2 4Q6 0 9 3T16 3" stroke={L} /><path d="M5 4h2v5h2l-3 3-3-3h2z" fill={L} /><path d="M11 12h2V7h2l-3-3-3 3h2z" fill={O} /><path d="M3 17Q9 9 15 17" stroke={O} strokeWidth="1.500" /></>],
  null,
  ["Break tangents", <><path d="M3 3L9 15" stroke={L} strokeWidth="1.200" /><path d="M9 15L15 3" stroke={O} strokeWidth="1.200" />{sq(3, 3)}{sq(9, 15, O)}{sq(15, 3, O)}</>],
  ["Unify tangents", <><path d="M3 3L16 15" stroke={L} strokeDasharray="4 1" />{sq(3, 3)}{sq(9, 9, O)}{sq(16, 15)}</>],
  ["Free tangent length", <><path d="M3 4L12 15M3 4H13" stroke={L} strokeDasharray="4 1" />{sq(3, 4)}{sq(15, 4, O)}{sq(12, 15)}</>],
  ["Lock tangent length", <><path d="M3 3L13 13" stroke={L} strokeDasharray="4 1" />{sq(3, 3)}{sq(14, 14, O)}<path d="M13 5h4v3h-4zM13.500 5V2h3v3" fill={L} stroke={L} /></>],
  null,
  ["Auto load", win(gear), "on"],
  ["Load on demand", <g opacity=".3">{win(<path d="M7 15Q5 9 10 8" stroke={L} strokeWidth="2" />)}</g>],
  null,
  ["Time snap", <>{magnet}<path d="M5 11v6h12v-6M8 12v4M11 12v4M14 12v4" stroke={O} strokeWidth="1.800" /></>, "on"],
  ["Value snap", <>{magnet}<path d="M10 2h6v14h-6M11 6h4M11 9h4M11 12h4" stroke={O} strokeWidth="1.500" /></>],
  null,
  ["Absolute view", <>{axes}<path d="M4 13L15 2" stroke={O} strokeWidth="1.500" /><path d="M4 3L15 13" stroke={L} /></>, "on"],
  ["Stacked view", <><path d="M2 1V16H17" stroke={L} strokeWidth="1.200" /><path d="M5 7L15 3" stroke={O} strokeWidth="1.500" /><path d="M4 8L16 12" stroke={L} /></>],
  ["Normalized view", <><path d="M2 1V16H17" stroke={L} strokeWidth="1.200" /><path d="M4 14L14 3" stroke={O} strokeWidth="1.500" /><path d="M4 3L14 14" stroke={L} /></>],
  ["Renormalize", <g opacity=".2">{axes}<path d="M8 6a4 4 0 0 1 7-2M16 7a4 4 0 0 1-7 2" stroke={L} strokeWidth="1.500" /></g>],
  null,
  ["Pre-infinity cycle", <><path d="M1 16Q5 14 4 8T8 2" stroke={L} /><path d="M9 3V16" stroke={L} strokeDasharray="2 1" /><path d="M10 15Q14 14 13 8T16 3" stroke={O} />{sq(10, 15, O)}{sq(16, 3, O)}</>],
  ["Pre-infinity cycle offset", <><path d="M2 16Q7 15 7 9T10 9" stroke={L} /><path d="M10 9Q14 9 14 5T16 2" stroke={O} />{sq(9, 9, O)}{sq(16, 3, O)}</>],
  ["Post-infinity cycle", <><path d="M2 15Q6 14 5 8T8 3" stroke={O} /><path d="M9 3V16" stroke={L} strokeDasharray="2 1" /><path d="M10 16Q14 14 13 8T17 2" stroke={L} />{sq(2, 15, O)}{sq(8, 3, O)}</>],
  ["Post-infinity cycle offset", <><path d="M2 15Q6 14 6 9H10" stroke={O} /><path d="M10 9Q14 9 14 4T17 1" stroke={L} />{sq(2, 15, O)}{sq(9, 9, O)}</>],
];

const GRAPH_RIGHT: [string, React.ReactNode][] = [
  ["Move view", <><rect x="7.500" y="7.500" width="4" height="4" stroke={O} /><path d="M9.500 0l3 4h-2v3h-2V4h-2zM9.500 18l3-4h-2v-2h-2v2h-2zM0 9.500l4-3v2h3v2H4v2zM18 9.500l-4-3v2h-2v2h2v2z" fill={L} /></>],
  ["Dope Sheet", win(<path d="M3 8h12M3 11h12M3 14h12" stroke="#333" strokeWidth="1.500" strokeDasharray="2 1" />)],
  ["Trax Editor", win(<path d="M3 7h7v3H3zM8 12h7v3H8z" fill={L} stroke="#333" />)],
  ["Time Editor", win(<><circle cx="9" cy="11" r="4" fill={L} stroke="#333" /><path d="M9 8.500V11.500h2" stroke="#333" /></>)],
];

const CHANNELS: [string, string][] = [
  ["Visibility", "text-[#858585]"],
  ["Translate X", "text-[#f22]"],
  ["Translate Y", "text-[#3ab03a]"],
  ["Translate Z", "text-[#4d86f0]"],
  ["Rotate X", "text-[#f22]"],
];

const gx = (f: number) => 407.7 + 5.711 * f;
const gy = (v: number) => 626.5 - 0.1615 * v;

function Chart() {
  const frames = Array.from({ length: 15 }, (_, i) => i * 20 - 20);
  const values = [400, 300, 200, 100, -100, -200, -300, -400];
  const keys: [number, number][] = [
    [1, 574.3], [1, 594.3], [1, 618.5], [1, 623.5], [1, 625.5],
    [118, 610.3], [118, 617.5], [118, 620.5], [118, 625.5], [118, 633.5],
    [240, 594.3], [240, 618.3], [240, 623.5], [240, 625.5], [240, 672.3],
  ];
  return (
    <svg viewBox="277 525 1636 172" preserveAspectRatio="xMinYMin slice" className="h-full w-full" role="img" aria-label="Animation curves">
      <path d="M277 525H1913V697H277Z" fill="#373737" />
      <path d="M413 550H1778V697H413Z" fill="#404040" />
      <path d="M277 525H1913V549H277Z" fill="#2f2f2f" />
      <path d="M413 525H1778V549H413Z" fill="#333" />
      <g shapeRendering="crispEdges">
        {values.map((v) => (
          <path key={v} d={`M277 ${Math.floor(gy(v))}.500H1913`} stroke={v % 200 ? "#545454" : "#4c4c4c"} strokeWidth="1" />
        ))}
        {frames.map((f) => (
          <path key={f} d={`M${Math.floor(gx(f))}.500 525V697`} stroke={f === 0 ? "#6a6a6a" : "#555"} />
        ))}
        <path d="M277 549.500H1913" stroke="#222" strokeWidth="2" />
        <path d="M277 626.500H1913" stroke="#7a7a7a" strokeWidth="1" />
      </g>
      {frames.map((f) => f !== 0 && f !== 240 && (
        <text key={f} x={gx(f) + 3} y="535" fontSize="10" fill="#9a9a9a">{f}</text>
      ))}
      <text x="410" y="535" fontSize="10" fill="#9a9a9a">0</text>
      {[300, 200, 100, 0, -100, -200, -300, -400].map((v) => (
        <text key={v} x="318" y={gy(v) - 3} textAnchor="end" fontSize="11" fontWeight="500" fill="#9a9a9a">{v}</text>
      ))}
      <text x="318" y="704" textAnchor="end" fontSize="11" fontWeight="500" fill="#9a9a9a">-500</text>
      <g fill="none" strokeWidth="1.200">
        <path d="M413.400 618.500H1778" stroke="#37a037" />
        <path d="M413.400 624.500H1778" stroke="#7f9a2c" />
        <path d="M413.400 625.500H1778" stroke="#b85050" />
        <path d="M413.400 626.500H1778" stroke="#b5a8a0" />
        <path d="M413.400 574.300C636 574.300 859 602 1081.600 620.300C1314 639 1546 672 1778.300 672.300" stroke="#4d86e8" />
        <path d="M413.400 627C636 627 859 633.500 1081.600 633.500C1314 633.500 1546 626.500 1778.300 626.500" stroke="#4d86e8" />
        <path d="M413.400 594.300C636 594.300 859 610 1081.600 610.300C1314 610 1546 594.500 1778.300 594.300" stroke="#f02828" />
      </g>
      {keys.map(([f, y]) => (
        <path key={f + "-" + y} d={`M${gx(f)} ${y - 3.5}l3.500 3.500l-3.500 3.500l-3.500 -3.500z`} fill="none" stroke="#ffa500" strokeWidth="1.500" />
      ))}
      <path d="M402 525H413V548L402 538Z" fill="#000" />
      <text x="404" y="535" fontSize="10" fill="#fff">1</text>
      <path d="M1779 525H1800V539H1786L1779 548Z" fill="#000" />
      <text x="1781" y="535" fontSize="10" fill="#fff">240</text>
      <path d="M796.500 547V697" stroke="#d8d820" strokeWidth="1.200" />
      <path d="M784 525H809V539L796.500 548L784 539Z" fill="#ff0" />
      <text x="796.500" y="535" textAnchor="middle" fontSize="10" fill="#111">68</text>
    </svg>
  );
}

function GraphEditor() {
  return (
    <section aria-label="Graph Editor" className="flex h-[225px] shrink-0 bg-[#373737]">
      <div role="tablist" className="flex w-4 shrink-0 flex-col gap-[3px] pt-0.5">
        <button role="tab" aria-selected="true" className="flex h-[93px] w-4 rotate-180 items-center justify-center bg-[#444] whitespace-nowrap text-[#e8e8e8] [writing-mode:vertical-rl]">
          Graph Editor
        </button>
        <button role="tab" className="flex h-[85px] w-4 rotate-180 items-center justify-center border border-[#2b2b2b] whitespace-nowrap text-[#9a9a9a] [writing-mode:vertical-rl]">
          Time Editor
        </button>
      </div>
      <div className="flex min-w-0 flex-1 flex-col bg-[#444]">
        <Menu items={["Edit", "View", "Select", "Curves", "Keys", "Tangents", "List", "Show", "Help"]} className="h-[23px] pl-[10px]" />
        <div role="toolbar" aria-label="Graph Editor toolbar" className="flex h-6 shrink-0 items-center pl-[3px]">
          {GRAPH_LEFT.map(([n, g]) => (
            <Tool key={n} label={n} wide>
              <Svg s={19}>{g}</Svg>
            </Tool>
          ))}
          <Sep className="w-3" />
          <label htmlFor="stat-time" className="w-[35px] shrink-0 pl-0.5 text-[#bdbdbd]">Stats</label>
          <input id="stat-time" className="h-[18px] w-[43px] rounded-sm bg-[#2b2b2b]" />
          <input aria-label="Stat value" className="ml-1.5 h-[18px] w-[43px] rounded-sm bg-[#2b2b2b]" />
          <button aria-label="Expand" className="ml-[9px] flex h-6 w-3 items-center justify-center border border-[#17e817]">
            <svg width="6" height="18" viewBox="0 0 6 18" aria-hidden="true">
              <path d="M0 0h1v18H0zM1 4l4 5-4 5z" fill="#8a8a8a" />
            </svg>
          </button>
          {GRAPH_MAIN.map((t, i) =>
            t ? (
              <Tool key={i} label={t[0]} mode={t[2]} wide>
                <Svg s={19}>{t[1]}</Svg>
              </Tool>
            ) : (
              <Sep key={i} className="w-[13px]" />
            ),
          )}
          <span className="ml-[3px] h-full w-px bg-[#2f2f2f]" />
          <div className="ml-auto flex">
            {GRAPH_RIGHT.map(([n, g]) => (
              <Tool key={n} label={n} wide>
                <Svg s={18}>{g}</Svg>
              </Tool>
            ))}
          </div>
        </div>
        <div className="mt-0.5 flex min-h-0 flex-1 pr-1 pb-1">
          <div className="flex w-[208px] shrink-0 flex-col pl-1">
            <Search label="Search channels" className="mt-1.5 mr-1 pl-1" />
            <div className="mt-3 flex h-[120px] bg-[#373737]">
              <ul className="min-w-0 flex-1">
                <li className="flex h-5 items-center bg-[#5285a6] pl-[5px] text-white">
                  <Plus round />
                  <span className="w-[7px]" />
                  <Plus />
                  <span className="w-[3px]" />
                  {TARGET}
                  <span className="pl-[3px]">Falloff_MASH1_Random</span>
                </li>
                {CHANNELS.map(([n, c]) => (
                  <li key={n} className={"flex h-5 items-center pl-8 text-[10px] italic " + c}>
                    <svg width="13" height="10" viewBox="0 0 13 10" aria-hidden="true">
                      <path d="M0 2h8v6H0zM7 0h1.500v10H7zM8 4h5v1.500H8z" fill={L} />
                    </svg>
                    <span className="pl-[37px]">{n}</span>
                  </li>
                ))}
              </ul>
              <div className="flex w-3 shrink-0 flex-col items-center pt-0.5 pb-[5px]">
                <Tri dir="up" />
                <div className="mt-0.5 mb-auto h-10 w-[10px] rounded bg-[#5d5d5d]" />
                <Tri dir="down" />
              </div>
            </div>
            <div className="bg-[#373737]">
              <HScroll className="mr-3.5" />
            </div>
            <div className="flex h-1 items-center pr-2">
              <Dots />
            </div>
          </div>
          <div className="flex w-2 shrink-0 justify-center">
            <Dots h={false} />
          </div>
          <div className="min-w-0 flex-1">
            <Chart />
          </div>
        </div>
      </div>
    </section>
  );
}

/* ---------- time and range ---------- */

function TimeSlider() {
  const ticks = Array.from({ length: 25 }, (_, i) => i);
  const tx = (f: number) => 13 + 6.65 * f;
  return (
    <svg viewBox="12 707 1612 73" preserveAspectRatio="xMinYMin slice" className="h-[73px] w-full bg-[#2b2b2b]" role="img" aria-label="Time slider">
      <path d="M467 708h4v72h-4z" fill="#505050" />
      {ticks.map((i) => (
        <g key={i}>
          <path d={`M${Math.round(tx(i * 10))} 721V776`} stroke="#858585" strokeWidth="2" />
          <text x={tx(i * 10) + 1} y="717" fontSize="11" fill="#7d7d7d">{i * 10}</text>
        </g>
      ))}
      <path d="M20 777H944V780H20Z" fill="#5285a6" />
      <path d="M944 777H1623V780H944Z" fill="#bfae6a" />
      <path d="M467 777h4v3h-4z" fill="#83a9c1" />
      <path d="M19.500 708V776" stroke="#e01010" />
      <path d="M798.500 708V776" stroke="#9a1a22" />
      <path d="M1609.500 708V776" stroke="#e01010" strokeWidth="1.500" />
      <text x="472" y="772" textAnchor="middle" fontSize="11" fill="#fff">68</text>
    </svg>
  );
}

const PLAY: [string, string, boolean?][] = [
  ["Go to start", "M1 3h1.500v12H1zM10 4v10L4 9zM17 4v10l-6-5z"],
  ["Step back one frame", "M3 3h1.500v12H3zM14 3v12L5 9z"],
  ["Step back one key", "M14 4v10L7 9z", true],
  ["Play backwards", "M16 1v16L3 9z"],
  ["Play forwards", "M2 1v16l13-8z"],
  ["Step forward one key", "M4 4v10l7-5z", true],
  ["Step forward one frame", "M15 3h-1.500v12H15zM4 3v12l9-6z"],
  ["Go to end", "M17 3h-1.500v12H17zM8 4v10l6-5zM1 4v10l6-5z"],
];

const field = "h-[25px] shrink-0 rounded-sm bg-[#2b2b2b] px-1 text-[#c8c8c8]";

function SetBox({ children }: Kids) {
  return <button className="h-[25px] w-[102px] shrink-0 rounded border border-[#555] px-[5px] text-left whitespace-nowrap text-[#c8c8c8]">{children}</button>;
}
function Outline() {
  return (
    <svg width="9" height="8" viewBox="0 0 9 8" className="mb-1 shrink-0" aria-hidden="true">
      <path d="M1 1h7L4.500 6z" fill="#666" stroke="#9a9a9a" />
    </svg>
  );
}

export default function App() {
  return (
    <main className="flex h-screen min-h-[720px] flex-col overflow-hidden bg-[#373737] font-['Noto_Sans',sans-serif] text-[11px] leading-[14px] text-[#c8c8c8]">
      <div className="flex min-h-0 flex-1">
        <Toolbox />
        <div className="ml-0.5 flex min-w-0 flex-1 flex-col">
          <div className="flex min-h-0 flex-1 border-b-2 border-[#373737]">
            <Outliner />
            <div className="w-0.5 shrink-0 bg-[#373737]" />
            <Viewport />
            <div className="w-0.5 shrink-0 bg-[#373737]" />
            <HumanIK />
            <SideTabs />
          </div>
          <GraphEditor />
        </div>
      </div>

      <div className="mt-0.5 flex h-[81px] shrink-0 bg-[#444]">
        <Grip />
        <div className="min-w-0 flex-1 pt-1">
          <TimeSlider />
        </div>
        <div className="flex w-[293px] shrink-0 items-start pt-[10px] pl-[7px]">
          <input aria-label="Current time" defaultValue="68" className="h-[18px] w-22 rounded-sm bg-[#2b2b2b] px-[5px] text-[#c8c8c8]" />
          <div className="-mt-px flex flex-1 justify-between pr-[10px] pl-[9px]">
            {PLAY.map(([n, d, key], i) => (
              <button key={n} aria-label={n}>
                <Svg>
                  <path d={d} fill={L} />
                  {key && (
                    <>
                      <path d={i < 4 ? "M5 0v18" : "M13 0v18"} stroke={L} />
                      <path d={i < 4 ? "M5 3v12" : "M13 3v12"} stroke={O} strokeWidth="3" />
                    </>
                  )}
                </Svg>
              </button>
            ))}
          </div>
        </div>
      </div>

      <div className="mt-0.5 flex h-[35px] shrink-0 items-center bg-[#444]">
        <div className="flex h-full">
          <Grip />
        </div>
        <input aria-label="Animation start" defaultValue="1" className={field + " ml-px w-[88px]"} />
        <input aria-label="Playback start" defaultValue="1" className={field + " ml-2 w-[88px]"} />
        <div className="ml-[7px] flex h-[25px] min-w-0 flex-1 items-center bg-[#373737] px-1">
          <div className="flex h-5 flex-1 items-center gap-1 rounded bg-[#5d5d5d] px-1">
            <span className="h-[14px] w-[15px] rounded bg-[#909090]" />
            <span>1</span>
            <span className="ml-auto">240</span>
            <span className="h-[14px] w-[15px] rounded bg-[#909090]" />
          </div>
        </div>
        <input aria-label="Playback end" defaultValue="240" className={field + " ml-2 w-[88px]"} />
        <input aria-label="Animation end" defaultValue="240" className={field + " ml-2 w-[88px]"} />
        <div className="ml-[3px] flex w-[576px] shrink-0 items-center">
          <svg width="5" height="20" viewBox="0 0 5 20" aria-hidden="true">
            <path d="M0 0h1v20H0zM1 5l4 5-4 5z" fill="#8a8a8a" />
          </svg>
          <Sep className="ml-3 w-3" />
          <span className="w-[10px]" />
          <Outline />
          <span className="w-[7px]" />
          <SetBox>No Character Set</SetBox>
          <span className="w-[11px]" />
          <Outline />
          <span className="w-[7px]" />
          <SetBox>No Anim Layer</SetBox>
          <Sep className="ml-1 w-3" />
          <Select label="Frame rate" value="24 fps" className="ml-2 h-[19px] w-[95px]" />
          <button aria-label="Loop" className="ml-[13px]">
            <Svg>
              <path d="M2 9V5h11M16 8v5H5" stroke={L} strokeWidth="2" />
              <path d="M12 1l5 4-5 4zM6 9l-5 4 5 4z" fill={L} />
            </Svg>
          </button>
          <button aria-label="Cached playback" className="ml-[9px] flex h-[23px] w-[23px] items-center justify-center bg-[#5285a6]">
            <Svg>
              <path d="M1 3h16v12H1z" fill="#333" stroke={L} />
              <path d="M1 5h3M1 9h3M1 12h3M14 5h3M14 9h3M14 12h3" stroke={L} strokeWidth="1.500" />
              <circle cx="9" cy="9" r="6" fill="#e6e02a" stroke="#333" />
              <path d="M9 5v5M9 11.500v2" stroke="#222" strokeWidth="2" />
            </Svg>
          </button>
          <Sep className="ml-1 w-3" />
          <button aria-label="Mute" className="ml-2">
            <Svg>
              <path d="M1 7h3l5-5v14l-5-5H1z" fill={L} />
              <path d="M11 6q2 3 0 6M13.500 4.500q3 4.500 0 9" stroke={L} strokeWidth="1.200" />
            </Svg>
          </button>
          <button aria-label="Auto keyframe" className="ml-[11px]">
            <Svg>
              <path d="M3 5a7 7 0 0 1 12 0M15 13a7 7 0 0 1-12 0" stroke={L} strokeWidth="1.500" />
              <path d="M2 1v5h5zM16 17v-5h-5z" fill={L} />
              <path d="M4 9h10" stroke={L} />
              <path d="M9 4v9" stroke={O} strokeWidth="2" />
            </Svg>
          </button>
          <button aria-label="Animation preferences" className="ml-[10px]">
            <Svg s={20}>
              <circle cx="5" cy="4" r="3" stroke={L} strokeWidth="1.500" />
              <circle cx="14" cy="5" r="2" fill={O} />
              <path d="M6 8l4-1 3 2-1 3 2 2-1 4M10 8l-3 5-4 2M13 9l4 1M10 12l-3 5" stroke={O} strokeWidth="2" />
            </Svg>
          </button>
        </div>
      </div>

      <div className="mt-0.5 flex h-[29px] shrink-0 items-center bg-[#444]">
        <div className="flex h-full">
          <Grip />
        </div>
        <label htmlFor="command" className="w-[46px] pl-3 text-[#ddd]">MEL</label>
        <input id="command" className="h-[21px] min-w-0 flex-[742] rounded-sm bg-[#2b2b2b] px-1" />
        <span className="mx-0.5 h-5 w-[3px] bg-[#555]" />
        <input aria-label="Command result" readOnly className="h-[21px] min-w-0 flex-[1079] bg-[#2b2b2b] px-1" />
        <button aria-label="Script Editor" className="mr-[7px] ml-1.5">
          <Svg s={19}>
            <path d="M0 0h18v18H0z" fill={L} />
            <path d="M0 4h18" stroke="#333" />
            <path d="M1.500 2h5" stroke="#333" strokeDasharray="1 1" />
            <path d="M6 7Q4 7 4.500 9T3 11.500Q5 11.500 4.500 14T6 16M12 7q2 0 1.500 2T15 11.500q-2 0-1.500 2.500T12 16M9 9v1.500M9 13v2" stroke="#333" strokeWidth="1.500" />
          </Svg>
        </button>
      </div>
    </main>
  );
}
